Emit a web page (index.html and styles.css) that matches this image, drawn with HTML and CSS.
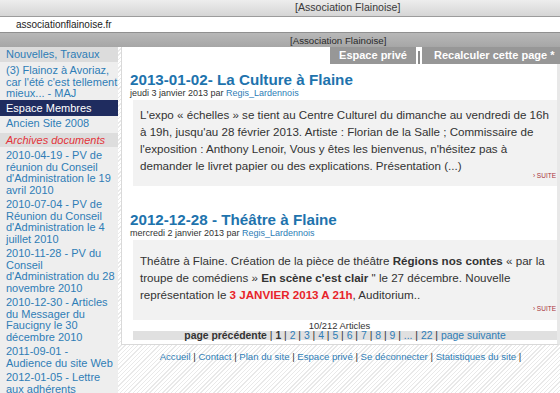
FILE: index.html
```html
<!DOCTYPE html>
<html lang="fr">
<head>
<meta charset="utf-8">
<title>[Association Flainoise]</title>
<link rel="stylesheet" href="styles.css">
</head>
<body>
<div class="win-title">[Association Flainoise]</div>
<div class="win-url">associationflainoise.fr</div>
<div class="win-tab">[Association Flainoise]</div>
<div class="page">
  <aside class="side">
    <a class="item item-grey">Nouvelles, Travaux</a>
    <a class="item">(3) Flainoz à Avoriaz,<br>car l'été c'est tellement<br>mieux... - MAJ</a>
    <div class="item item-navy">Espace Membres</div>
    <a class="item item-ancien">Ancien Site 2008</a>
    <div class="item item-arch">Archives documents</div>
    <a class="item">2010-04-19 - PV de<br>réunion du Conseil<br>d'Administration le 19<br>avril 2010</a>
    <a class="item">2010-07-04 - PV de<br>Réunion du Conseil<br>d'Administration le 4<br>juillet 2010</a>
    <a class="item">2010-11-28 - PV du<br>Conseil<br>d'Administration du 28<br>novembre 2010</a>
    <a class="item">2010-12-30 - Articles<br>du Messager du<br>Faucigny le 30<br>décembre 2010</a>
    <a class="item">2011-09-01 -<br>Audience du site Web</a>
    <a class="item">2012-01-05 - Lettre<br>aux adhérents</a>
  </aside>
  <div class="col">
    <main class="main">
      <nav class="tabs">
        <span class="tab">Espace privé</span>
        <span class="tab-sep"></span>
        <span class="tab tab-wide">Recalculer cette page *</span>
      </nav>
      <article class="art">
        <h2 class="art-title">2013-01-02- La Culture à Flaine</h2>
        <div class="meta">jeudi 3 janvier 2013 par <a>Regis_Lardennois</a></div>
        <div class="box">
          <p>L'expo « échelles » se tient au Centre Culturel du dimanche au vendredi de 16h<br>à 19h, jusqu'au 28 février 2013. Artiste : Florian de la Salle ; Commissaire de<br>l'exposition : Anthony Lenoir, Vous y êtes les bienvenus, n'hésitez pas à<br>demander le livret papier ou des explications. Présentation (...)</p>
          <div class="suite">› Suite</div>
        </div>
      </article>
      <article class="art">
        <h2 class="art-title art-title-2">2012-12-28 - Théâtre à Flaine</h2>
        <div class="meta">mercredi 2 janvier 2013 par <a>Regis_Lardennois</a></div>
        <div class="box box-2">
          <p>Théâtre à Flaine. Création de la pièce de théâtre <b>Régions nos contes</b> « par la<br>troupe de comédiens » <b>En scène c'est clair</b> " le 27 décembre. Nouvelle<br>représentation le <b class="red">3 JANVIER 2013 A 21h</b>, Auditorium..</p>
          <div class="suite suite-2">› Suite</div>
        </div>
      </article>
      <div class="count">10/212 Articles</div>
      <div class="pager"><b>page précédente</b> | <b>1</b> | <a>2</a> | <a>3</a> | <a>4</a> | <a>5</a> | <a>6</a> | <a>7</a> | <a>8</a> | <a>9</a> | <a>...</a> | <a>22</a> | <a>page suivante</a></div>
    </main>
    <footer class="foot"><a>Accueil</a> | <a>Contact</a> | <a>Plan du site</a> | <a>Espace privé</a> | <a>Se déconnecter</a> | <a>Statistiques du site</a> |</footer>
  </div>
</div>
</body>
</html>
```

FILE: styles.css
```css
* { box-sizing: border-box; }
html, body { margin: 0; padding: 0; }
body {
  width: 560px;
  height: 393px;
  overflow: hidden;
  font-family: "Liberation Sans", Arial, sans-serif;
  color: #333;
  background: #fff;
}
a { color: #2e7db6; text-decoration: none; }

.win-title {
  height: 17px;
  background: linear-gradient(#ededed, #d5d5d5);
  border-bottom: 1px solid #9c9c9c;
  font-size: 10.6px;
  line-height: 15px;
  color: #3a3a3a;
  padding-left: 295px;
}
.win-url {
  height: 15px;
  background: #fff;
  font-size: 10px;
  line-height: 16px;
  padding-left: 16px;
  color: #222;
}
.win-tab {
  height: 15px;
  background: linear-gradient(#b8b8b8, #a6a6a6);
  border-top: 1px solid #909090;
  font-size: 9.7px;
  line-height: 16px;
  color: #2a2a2a;
  padding-left: 290px;
}

.page {
  display: flex;
  height: 346px;
  background: repeating-linear-gradient(135deg, #ffffff 0 2px, #e9e9e9 2px 3px);
}
.side {
  width: 118px;
  flex: none;
  background: #eeeeee;
  display: flex;
  flex-direction: column;
  font-size: 11px;
  line-height: 11.5px;
  white-space: nowrap;
}
.item {
  display: block;
  margin-top: 3px;
  padding: 0 2px 0 6px;
  color: #2e7db6;
}
.item-grey {
  margin-top: 0;
  height: 16px;
  line-height: 15px;
  background: #dcdcdc;
}
.item-navy {
  margin-top: 0.5px;
  height: 16px;
  line-height: 16px;
  background: #1f2c5f;
  color: #fff;
}
.item-ancien { margin-top: 2px; }
.item-arch {
  margin-top: 3.5px;
  height: 14px;
  line-height: 14px;
  background: #dddddd;
  color: #e3333a;
  font-style: italic;
}

.col {
  flex: 1;
  margin-left: 3px;
  display: flex;
  flex-direction: column;
}
.main {
  background: #fff;
  border-left: 1px solid #d9d9d9;
  border-bottom: 1px solid #d9d9d9;
  border-right: 3px solid #e8e8e8;
  padding-bottom: 4px;
}
.tabs {
  display: flex;
  justify-content: flex-end;
  align-items: flex-end;
  height: 17px;
  margin-right: -3px;
}
.tab {
  align-self: stretch;
  background: #979797;
  color: #fff;
  font-weight: bold;
  font-size: 11px;
  line-height: 17px;
  width: 86px;
  text-align: center;
}
.tab-sep {
  width: 2px;
  height: 13px;
  margin: 0 2px;
  background: #8a8a8a;
}
.tab-wide {
  width: 138px;
  text-align: left;
  padding-left: 12px;
  white-space: nowrap;
  overflow: hidden;
}

.art-title {
  margin: 7px 0 0 8px;
  font-size: 15.2px;
  line-height: 17px;
  color: #1e73ad;
  font-weight: bold;
}
.art-title-2 { margin-top: 24.5px; }
.meta {
  margin-left: 8px;
  font-size: 9px;
  line-height: 10px;
  color: #333;
}
.box {
  margin: 2px 0 0 11px;
  background: #f2f2f2;
  padding: 5.5px 1px 6.5px 7px;
}
.box-2 {
  margin-top: 2.5px;
  padding-top: 11.5px;
  padding-bottom: 7px;
}
.box p {
  margin: 0;
  font-size: 11.6px;
  line-height: 17px;
  color: #333;
  white-space: nowrap;
}
.suite {
  text-align: right;
  font-size: 6.5px;
  text-transform: uppercase;
  color: #a8323a;
  line-height: 8px;
  margin-top: -2px;
}
.suite-2 { margin-top: 2.5px; }
.red { color: #e8242a; }

.count {
  margin-top: 1px;
  text-align: center;
  font-size: 9.4px;
  line-height: 10px;
  color: #333;
}
.pager {
  margin-left: 11px;
  background: #e0e0e0;
  text-align: center;
  font-size: 10.4px;
  line-height: 9px;
  height: 9px;
  color: #333;
  white-space: nowrap;
}
.foot {
  text-align: center;
  font-size: 9.6px;
  line-height: 12px;
  padding-top: 6px;
  color: #333;
  white-space: nowrap;
}
```
